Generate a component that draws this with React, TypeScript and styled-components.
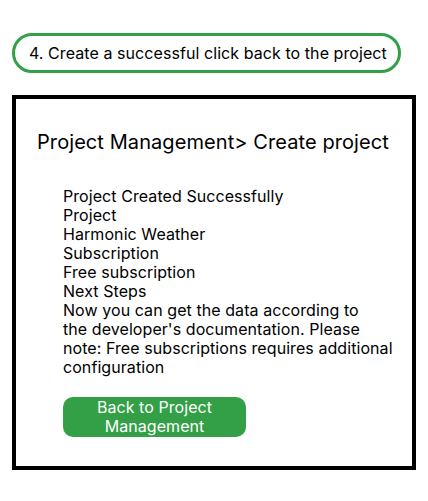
import React from "react";
import styled, { createGlobalStyle } from "styled-components";

const Global = createGlobalStyle`
  html, body { margin: 0; padding: 0; background: #ffffff; }
  body { font-family: Inter, "Noto Sans", sans-serif; color: #000000; }
`;

const Page = styled.div`
  display: flex;
  flex-direction: column;
  align-items: flex-start;
  gap: 22px;
  padding: 33px 12px 0 12px;
`;

const StepPill = styled.div`
  box-sizing: border-box;
  height: 40px;
  border: 3px solid #33a047;
  border-radius: 20px;
  padding: 0 11px 0 14px;
  font-size: 16px;
  letter-spacing: 0.07px;
  line-height: 34px;
  white-space: nowrap;
`;

const Card = styled.section`
  box-sizing: border-box;
  width: 404px;
  height: 375px;
  border: 4px solid #000000;
  padding: 31px 21px 0 21px;
  display: flex;
  flex-direction: column;
`;

const Title = styled.h1`
  margin: 0;
  font-size: 20px;
  font-weight: 400;
  letter-spacing: 0.08px;
  line-height: 24px;
`;

const Content = styled.div`
  margin: 33px 0 0 26px;
  display: flex;
  flex-direction: column;
  align-items: flex-start;
`;

const Line = styled.div`
  font-size: 16px;
  letter-spacing: 0.07px;
  line-height: 19px;
  white-space: nowrap;
`;

const BackButton = styled.button`
  box-sizing: border-box;
  margin-top: 20px;
  width: 183px;
  height: 40px;
  border: none;
  border-radius: 10px;
  background: #33a047;
  color: #ffffff;
  font-family: Inter, "Noto Sans", sans-serif;
  font-size: 16px;
  letter-spacing: 0.07px;
  line-height: 19px;
  padding: 1px 8px;
  text-align: center;
  cursor: pointer;
`;

const lines = [
  "Project Created Successfully",
  "Project",
  "Harmonic Weather",
  "Subscription",
  "Free subscription",
  "Next Steps",
  "Now you can get the data according to",
  "the developer's documentation. Please",
  "note: Free subscriptions requires additional",
  "configuration",
];

export default function App() {
  return (
    <>
      <Global />
      <Page>
        <StepPill>4. Create a successful click back to the project</StepPill>
        <Card>
          <Title>Project Management&gt; Create project</Title>
          <Content>
            {lines.map((l, i) => (
              <Line key={i}>{l}</Line>
            ))}
            <BackButton>Back to Project Management</BackButton>
          </Content>
        </Card>
      </Page>
    </>
  );
}
